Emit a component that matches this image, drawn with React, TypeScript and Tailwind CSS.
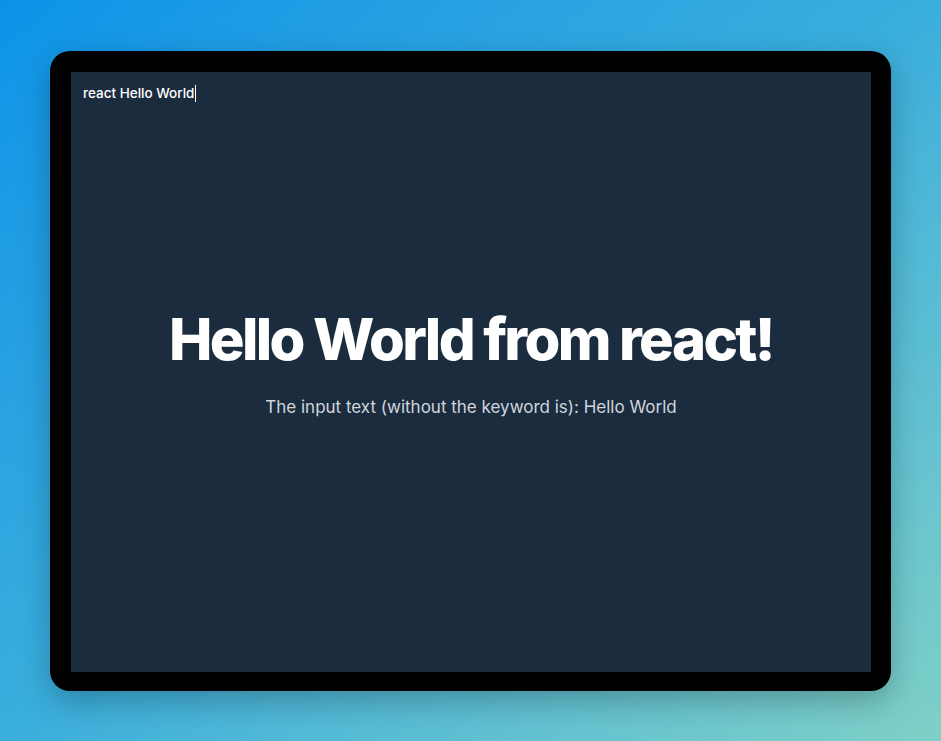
export default function App() {
  return (
    <div className="w-[941px] h-[741px] bg-gradient-to-br from-[#0a93e8] via-[#3aaedc] to-[#7fd0c6] flex items-center justify-center font-['Inter',sans-serif]">
      <div className="w-[841px] h-[640px] bg-black rounded-[20px] p-[21px] shadow-[0_10px_30px_rgba(0,0,0,0.25)]">
        <div className="w-[800px] h-[600px] bg-[#1c2c3f] flex flex-col">
          {/* input bar */}
          <div className="h-[44px] px-3 flex items-center text-[13.5px] font-medium text-white">
            <span>react Hello World</span>
            <span className="w-px h-[17px] bg-white ml-[1px]" />
          </div>
          <div className="flex-1 flex flex-col items-center justify-center pb-[56px]">
            <h1 className="text-[58px] font-extrabold tracking-[-0.045em] text-white leading-none">
              Hello World from react!
            </h1>
            <p className="mt-[27px] text-[17px] text-[#d1d5db]">
              The input text (without the keyword is): Hello World
            </p>
          </div>
        </div>
      </div>
    </div>
  );
}
